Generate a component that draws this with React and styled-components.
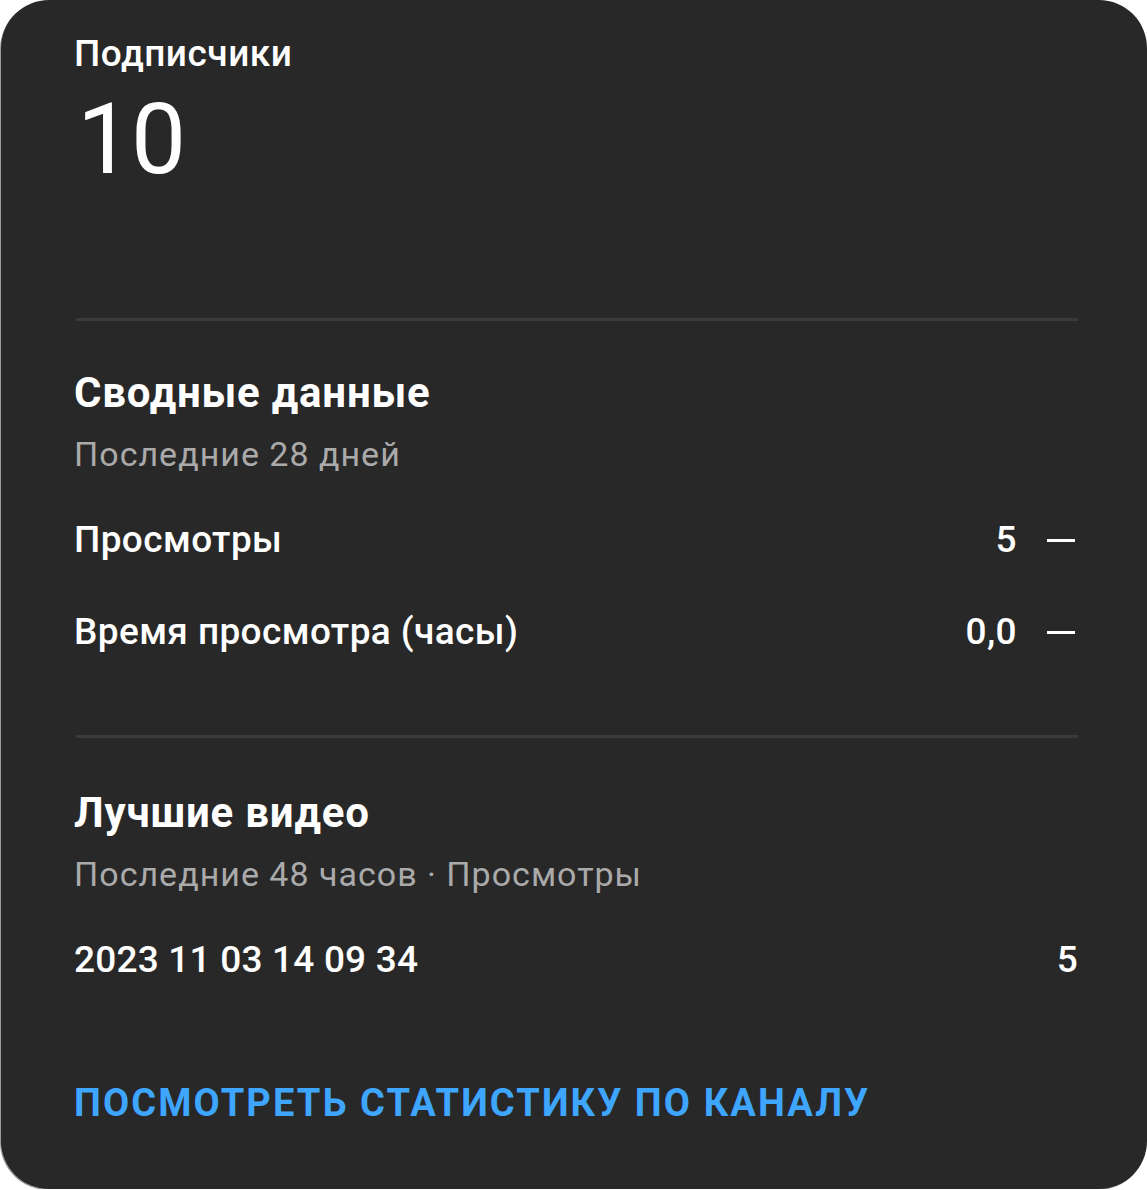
import React from 'react';
import styled, { createGlobalStyle } from 'styled-components';

const GlobalStyle = createGlobalStyle`
  html, body {
    margin: 0;
    padding: 0;
    background: #ffffff;
  }
  body {
    font-family: Roboto, 'Noto Sans', Arial, sans-serif;
  }
`;

const Card = styled.div`
  box-sizing: border-box;
  width: 1146px;
  height: 1189px;
  margin-left: 1px;
  background: #282828;
  border-radius: 48px;
  box-shadow: -1px 1px 0 #9a9a9a;
  padding: 30px 69px 0 73px;
  color: #ffffff;
  display: flex;
  flex-direction: column;
`;

const Label = styled.div`
  font-size: 37px;
  font-weight: 500;
  line-height: 48px;
  letter-spacing: 0.5px;
`;

const BigNumber = styled.div`
  margin-top: 6px;
  font-size: 98px;
  font-weight: 400;
  line-height: 112px;
  margin-left: 3px;
  letter-spacing: -1px;
`;

const Divider = styled.hr`
  border: none;
  height: 3px;
  background: #3a3a3a;
  margin: ${p => p.$top}px 0 0 2px;
`;

const Section = styled.section`
  display: flex;
  flex-direction: column;
  padding-top: ${p => p.$top}px;
`;

const Title = styled.h3`
  margin: 0;
  font-size: 42px;
  font-weight: 700;
  line-height: 52px;
  letter-spacing: 0.8px;
`;

const Sub = styled.div`
  margin-top: 7px;
  font-size: 34px;
  color: #aaaaaa;
  line-height: 56px;
  letter-spacing: 1px;
`;

const Row = styled.div`
  display: flex;
  align-items: center;
  justify-content: space-between;
  font-size: 37px;
  font-weight: 500;
  line-height: 48px;
  letter-spacing: ${p => p.$spacing ?? 0.4}px;
  margin-top: ${p => p.$top || 0}px;
`;

const Value = styled.div`
  display: flex;
  align-items: center;
  gap: 30px;
`;

const Dash = styled.span`
  display: inline-block;
  width: 28px;
  height: 3px;
  margin-right: 3px;
  background: #ffffff;
`;

const Link = styled.a`
  margin-top: ${p => p.$top}px;
  color: #3ea6ff;
  font-size: 38px;
  font-weight: 700;
  line-height: 48px;
  text-decoration: none;
  letter-spacing: 2.1px;
  cursor: pointer;
`;

export default function App() {
  return (
    <>
      <GlobalStyle />
      <Card>
        <Label>Подписчики</Label>
        <BigNumber>10</BigNumber>
        <Divider $top={122} />
        <Section $top={46}>
          <Title>Сводные данные</Title>
          <Sub>Последние 28 дней</Sub>
          <Row $top={34}>
            <span>Просмотры</span>
            <Value>5<Dash /></Value>
          </Row>
          <Row $top={44}>
            <span>Время просмотра (часы)</span>
            <Value>0,0<Dash /></Value>
          </Row>
        </Section>
        <Divider $top={79} />
        <Section $top={49}>
          <Title>Лучшие видео</Title>
          <Sub>Последние 48 часов · Просмотры</Sub>
          <Row $top={34} $spacing={0.2}>
            <span>2023 11 03 14 09 34</span>
            <span>5</span>
          </Row>
        </Section>
        <Link $top={95}>ПОСМОТРЕТЬ СТАТИСТИКУ ПО КАНАЛУ</Link>
      </Card>
    </>
  );
}
